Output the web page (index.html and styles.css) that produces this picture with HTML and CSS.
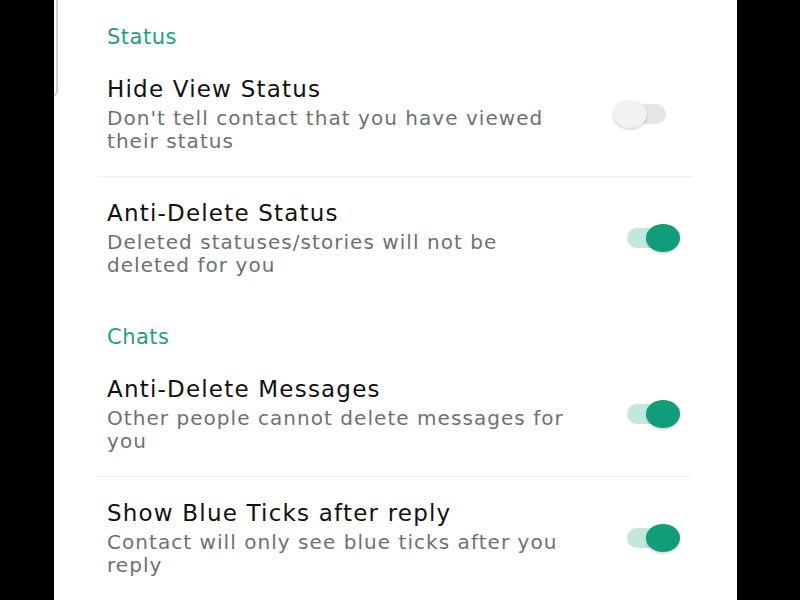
FILE: index.html
```html
<!DOCTYPE html>
<html lang="en">
<head>
<meta charset="utf-8">
<title>Privacy settings</title>
<link rel="stylesheet" href="styles.css">
</head>
<body>
<div class="frame">
  <div class="bezel bezel-left"></div>
  <main class="screen">
    <span class="edge"></span>
    <section class="group">
      <h2 class="group-title">Status</h2>
      <div class="item">
        <div class="item-text">
          <div class="item-title">Hide View Status</div>
          <div class="item-sub">Don't tell contact that you have viewed their status</div>
        </div>
        <span class="switch switch-off"><span class="track"></span><span class="thumb"></span></span>
      </div>
      <div class="divider"></div>
      <div class="item">
        <div class="item-text">
          <div class="item-title">Anti-Delete Status</div>
          <div class="item-sub">Deleted statuses/stories will not be deleted for you</div>
        </div>
        <span class="switch switch-on"><span class="track"></span><span class="thumb"></span></span>
      </div>
    </section>
    <section class="group">
      <h2 class="group-title">Chats</h2>
      <div class="item">
        <div class="item-text">
          <div class="item-title">Anti-Delete Messages</div>
          <div class="item-sub">Other people cannot delete messages for you</div>
        </div>
        <span class="switch switch-on"><span class="track"></span><span class="thumb"></span></span>
      </div>
      <div class="divider"></div>
      <div class="item">
        <div class="item-text">
          <div class="item-title">Show Blue Ticks after reply</div>
          <div class="item-sub">Contact will only see blue ticks after you reply</div>
        </div>
        <span class="switch switch-on"><span class="track"></span><span class="thumb"></span></span>
      </div>
    </section>
  </main>
  <div class="bezel bezel-right"></div>
</div>
</body>
</html>
```
FILE: styles.css
```css
html, body {
  margin: 0;
  padding: 0;
  background: #000;
}
body {
  font-family: "DejaVu Sans", "Noto Sans", sans-serif;
  width: 800px;
  height: 600px;
  overflow: hidden;
}
.frame {
  display: flex;
  height: 600px;
}
.bezel {
  background: #000;
  flex: none;
}
.bezel-left {
  width: 54px;
}
.bezel-right {
  width: 63px;
}
.screen {
  position: relative;
  flex: none;
  width: 683px;
  background: #fff;
  overflow: hidden;
}
.edge {
  position: absolute;
  left: -6px;
  top: -10px;
  width: 8px;
  height: 105px;
  border-right: 2px solid #cfcfd1;
  border-bottom: 2px solid #cfcfd1;
  border-bottom-right-radius: 6px;
}
.group-title {
  margin: 0;
  padding: 24px 0 3px 53px;
  font-size: 21px;
  line-height: 26px;
  font-weight: 400;
  color: #1f9e80;
  letter-spacing: 0.5px;
}
.item {
  display: flex;
  align-items: center;
  padding: 22px 0 23px 53px;
}
.item-text {
  flex: none;
  width: 472px;
}
.item-title {
  font-size: 23px;
  line-height: 28px;
  color: #111;
  letter-spacing: 1.2px;
}
.item-sub {
  margin-top: 4px;
  font-size: 20px;
  line-height: 23px;
  color: #6c7176;
  letter-spacing: 1.05px;
}
.divider {
  height: 1px;
  background: #f0f0f1;
  margin: 0 45px 0 43px;
}
.switch {
  position: relative;
  width: 67px;
  height: 28px;
  margin-left: auto;
  margin-right: 57px;
  flex: none;
}
.track {
  position: absolute;
  top: 4px;
  width: 46px;
  height: 20px;
  border-radius: 10px;
}
.thumb {
  position: absolute;
  top: 0;
  width: 34px;
  height: 28px;
  border-radius: 50%;
  box-shadow: 0 1.5px 2.5px rgba(0, 0, 0, 0.18);
}
.switch-off .track {
  left: 7px;
  background: #e5e5e7;
}
.switch-off .thumb {
  left: 0;
  background: #f1f1f2;
}
.switch-on .track {
  left: 14px;
  background: #c2e7dd;
}
.switch-on .thumb {
  left: 33px;
  background: #0f9d7a;
}
```
